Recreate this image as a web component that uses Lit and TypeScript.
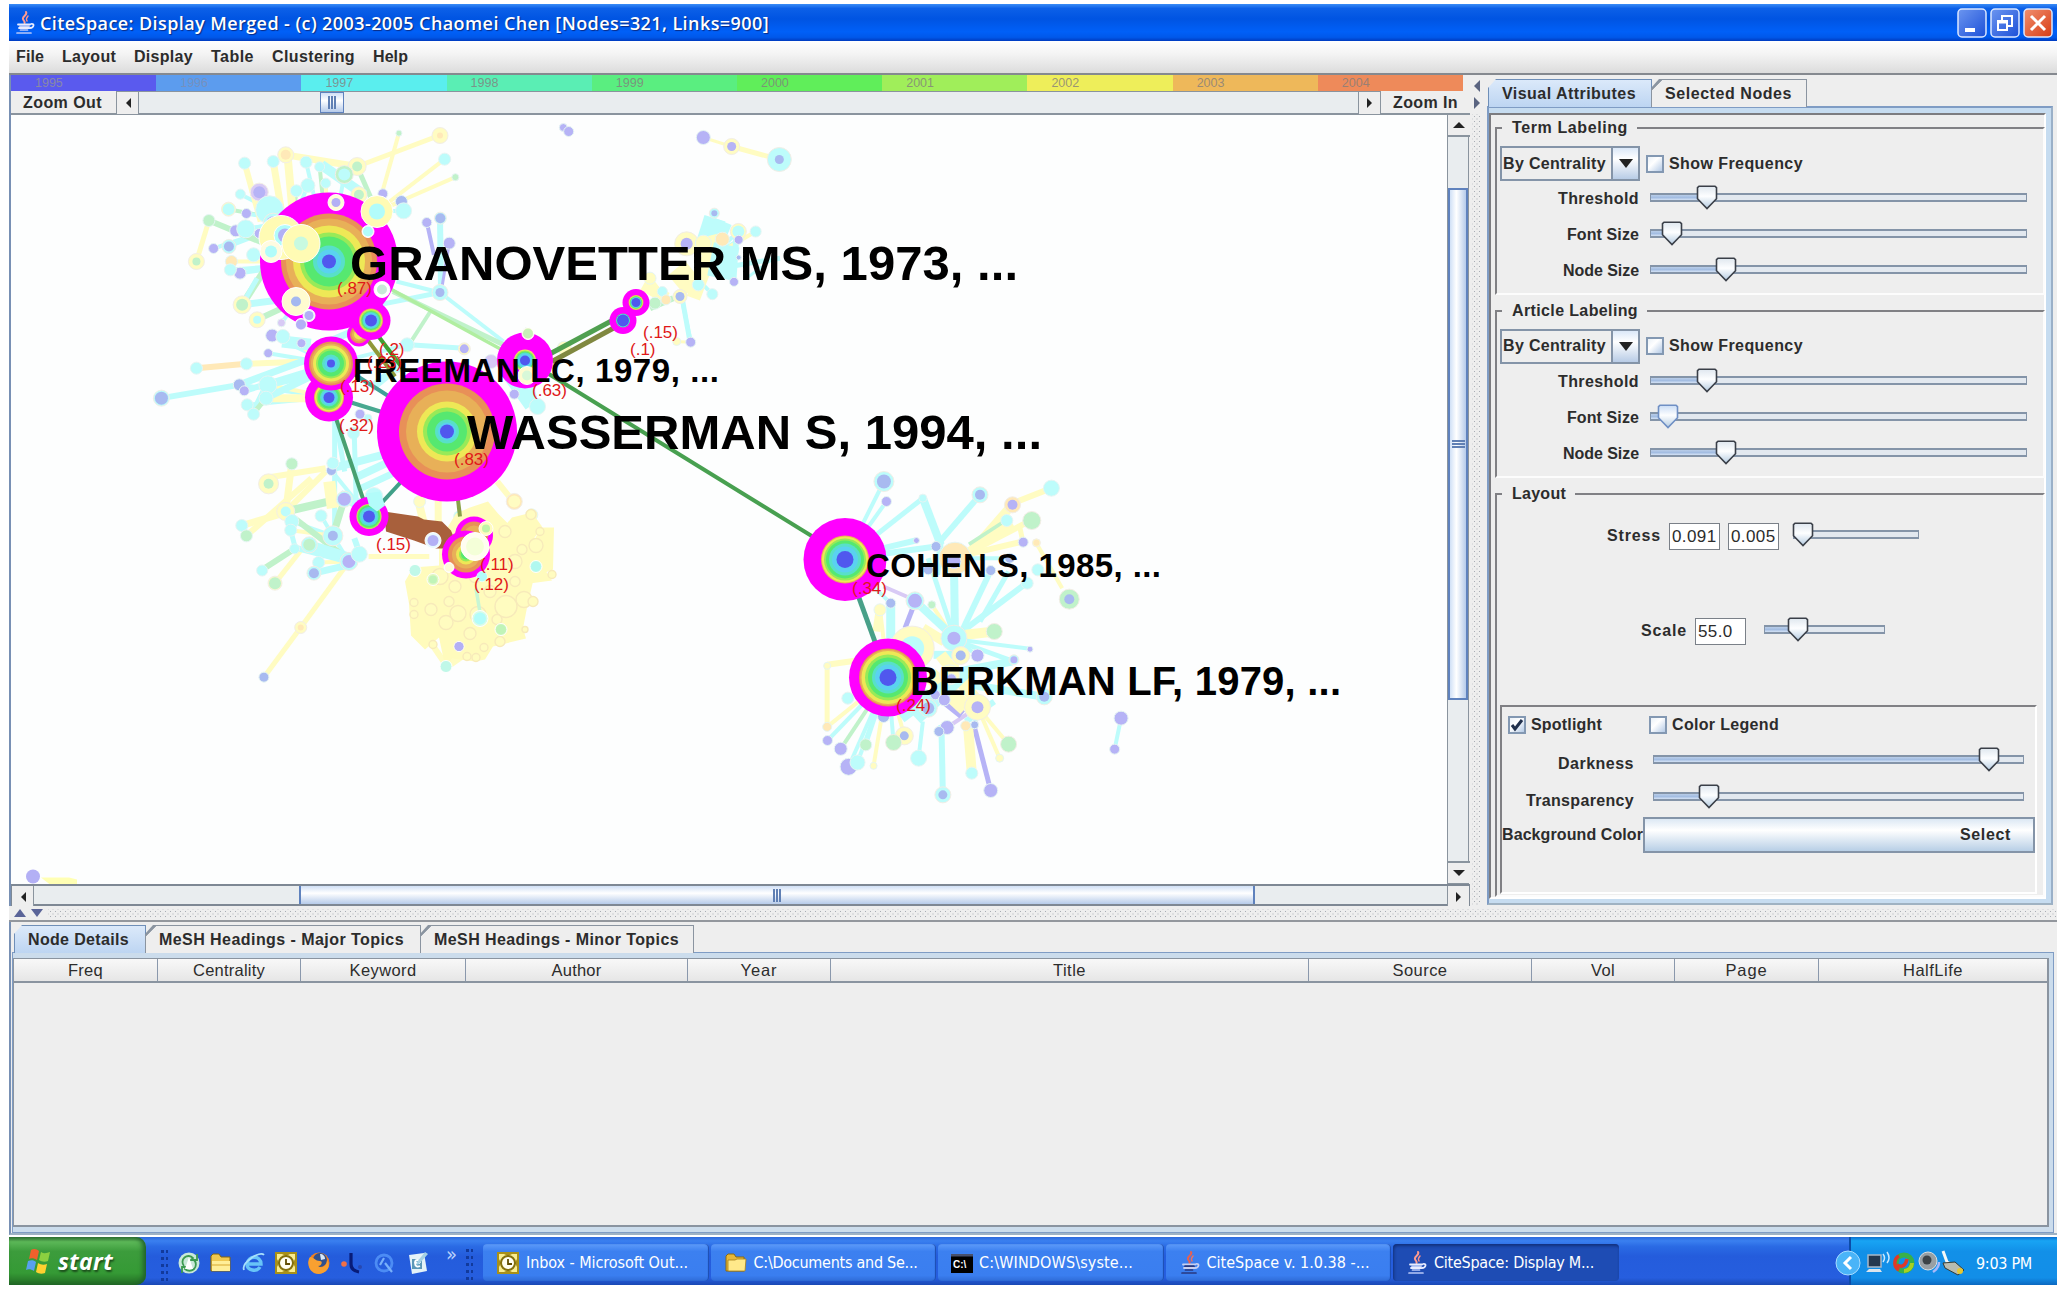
import { LitElement, html, css, svg } from "lit";
import { customElement, property } from "lit/decorators.js";
import { classMap } from "lit/directives/class-map.js";
import { styleMap } from "lit/directives/style-map.js";

/* Text that spreads its letters so that it fills a given width. */
@customElement("fit-text")
class FitText extends LitElement {
  @property({ type: Number }) w = 0;
  @property() text = "";
  static styles = css`
    :host { display: inline-block; white-space: pre; }
  `;
  render() {
    return html`<span>${this.text}</span>`;
  }
  updated() {
    const span = this.renderRoot.querySelector("span") as HTMLElement;
    span.style.letterSpacing = "0px";
    const natural = span.getBoundingClientRect().width;
    if (natural && this.w) {
      span.style.letterSpacing = `${(this.w - natural) / this.text.length}px`;
    }
  }
}

@customElement("metal-slider")
class MetalSlider extends LitElement {
  @property({ type: Number }) w = 377;
  @property({ type: Number }) pos = 0;
  @property({ type: Boolean }) hot = false;
  static styles = css`
    :host { display: block; }
    .slider { position: relative; height: 26px; }
    .track { box-sizing: border-box; position: absolute; left: 0; right: 0; top: 7px; height: 9px; border: 2px solid #8494a8; border-width: 2px 1.5px 2px 1.5px; background: #e2e8ef; }
    .fill { height: 5px; background: linear-gradient(#b9cde8, #a3bde2 50%, #d4e2f5); }
    .thumb { position: absolute; top: -1px; width: 22px; height: 25px; margin-left: -11px; }
  `;
  render() {
    const edge = this.hot ? "#6f8fc4" : "#3a3f48";
    return html`<div class="slider" style=${styleMap({ width: `${this.w}px` })}>
      <div class="track"><div class="fill" style=${styleMap({ width: `${Math.max(0, this.pos)}px` })}></div></div>
      <svg class="thumb" style=${styleMap({ left: `${this.pos}px` })} viewBox="0 0 22 25">
        <defs><linearGradient id="g" x1="0" y1="0" x2="0" y2="1">
          <stop offset="0" stop-color=${this.hot ? "#c9dcf5" : "#dfe7ef"} /><stop offset=".45" stop-color="#fdfeff" /><stop offset="1" stop-color="#b5cce2" />
        </linearGradient></defs>
        <path d="M3 1.2h16l1.5 1.5v11L11 23.5L1.500 13.700v-11z" fill="url(#g)" stroke=${edge} stroke-width="1.6" />
      </svg>
    </div>`;
  }
}

type Tone = "y" | "c" | "p" | "g" | "o" | "b" | "m";
const TONE: Record<Tone, string> = {
  y: "#fffcc2", c: "#bdfcfb", p: "#b6b3f6", g: "#c0f2ca", o: "#ffe9b8", b: "#a8baf0", m: "#d8caf5",
};

/* x, y, radius, tone, hub index (-1: none), link tone, halo radius, halo tone */
type Spot = [number, number, number, Tone, number?, Tone?, number?, Tone?];
interface Cluster { ox: number; oy: number; sx: number; sy: number; hubs: number[][]; spots: Spot[]; links: [number, number, number, number, Tone, number][]; }

const clusters: Cluster[] = [
  {
    ox: 150, oy: 110, sx: 1 / 2.8, sy: 1 / 3,
    hubs: [[502, 450], [400, 330], [635, 300], [508, 757], [502, 857], [812, 543], [700, 430], [1050, 748]],
    links: [
      [812, 543, 990, 690, "c", 4], [812, 543, 640, 580, "c", 5], [690, 510, 812, 543, "c", 4],
      [775, 332, 795, 430, "p", 4], [812, 320, 815, 543, "c", 6], [838, 395, 815, 543, "p", 3],
      [680, 540, 990, 700, "g", 5], [785, 600, 725, 700, "g", 4], [725, 700, 880, 710, "c", 5],
      [130, 770, 270, 757, "o", 6], [270, 757, 440, 750, "y", 6], [32, 860, 250, 820, "c", 6], [250, 820, 450, 740, "c", 7],
      [265, 838, 440, 780, "c", 6], [290, 905, 330, 820, "c", 8], [330, 820, 450, 790, "c", 7], [325, 860, 450, 860, "y", 8],
      [290, 905, 325, 860, "g", 5], [325, 860, 460, 790, "c", 7], [370, 690, 450, 700, "c", 12],
      [580, 165, 635, 300, "g", 5], [380, 130, 580, 165, "y", 7], [580, 165, 810, 72, "y", 5],
      [165, 327, 330, 400, "g", 6], [258, 580, 400, 560, "c", 7], [258, 580, 330, 460, "g", 7],
      [300, 625, 410, 570, "g", 6], [300, 500, 258, 580, "c", 5], [130, 450, 165, 327, "y", 5],
      [265, 155, 310, 330, "y", 6], [345, 150, 370, 310, "y", 7], [385, 130, 400, 310, "y", 8],
      [1490, 560, 1512, 690, "c", 5], [510, 857, 545, 1080, "c", 5], [1010, 790, 1070, 880, "c", 16],
      [620, 830, 700, 760, "c", 8], [480, 160, 600, 250, "c", 10], [610, 640, 480, 700, "c", 7],
    ],
    spots: [
      [697, 65, 3, "g", 2, "y"], [812, 72, 3, "o", -1, "y", 8, "y"], [825, 143, 6, "c", 2, "y"], [855, 197, 3.5, "g", 2, "y"],
      [380, 130, 5, "o", -1, "y", 8, "y"], [265, 155, 6, "c"], [345, 150, 6, "c"], [437, 152, 6, "c", 0, "c"], [475, 166, 5, "c", 0, "g"],
      [580, 165, 5, "g", -1, "y", 9, "y"], [544, 189, 6, "c", 0, "c", 9, "g"], [492, 215, 5, "c", 0, "y"], [442, 222, 7, "c", 1, "c"],
      [253, 248, 5, "c", 1, "c"], [306, 242, 6, "p", 1, "c", 9, "m"], [410, 238, 6, "c", 1, "g"], [585, 250, 5, "g", 0, "y", 8, "y"],
      [652, 247, 5, "p", 2, "c"], [704, 270, 6, "b", 2, "y"], [710, 298, 8, "c", 2, "c"], [220, 293, 6, "c", 1, "g", 7, "y"],
      [270, 306, 5, "p", 1, "c"], [165, 327, 6, "g"], [240, 358, 6, "p", 1, "c"], [268, 352, 9, "c", 1, "c"], [306, 366, 5, "p", 1, "g"],
      [335, 295, 14, "c", 1, "y"], [345, 335, 7, "p", 1, "c", 10, "c"], [178, 411, 5, "p", 1, "c"], [221, 405, 5, "b", 1, "c", 7, "c"],
      [130, 450, 4, "g", -1, "y", 8, "y"], [228, 450, 6, "o", 0, "y"], [252, 485, 6, "p", 0, "c"], [225, 475, 6, "c", 0, "c"], [290, 430, 7, "c", 0, "c"],
      [258, 580, 6, "g", -1, "y", 9, "y"], [300, 625, 4, "c", -1, "y", 8, "y"], [368, 634, 4, "m", 0, "c"], [342, 672, 6.5, "p", 3, "c"],
      [331, 725, 4.5, "p", 3, "c"], [372, 675, 7, "c", 3, "y"], [424, 695, 4.5, "p", 3, "c"], [130, 770, 6, "c"], [270, 757, 6, "c"],
      [32, 860, 6.5, "b", -1, "c", 8, "c"], [250, 820, 6, "b", 4, "c"], [264, 838, 5, "p"], [330, 820, 9, "c", 4, "y"], [325, 860, 7, "c"],
      [272, 880, 6, "c", 4, "c"], [290, 908, 6, "c"], [775, 333, 5, "p"], [813, 320, 5, "b", -1, "c", 6, "c"], [838, 395, 6, "p"],
      [812, 543, 4.5, "b", -1, "c", 8, "c"], [720, 700, 7, "c", 3, "c"], [880, 712, 4.5, "p", -1, "c", 6, "y"], [955, 750, 7, "m", 7, "c"],
      [1160, 710, 7, "y", 7, "y"], [1057, 663, 5, "g", 7, "y"], [1020, 848, 5, "p", 7, "c"], [588, 908, 5, "p"], [570, 965, 6, "c"], [690, 760, 8, "c"],
      [1085, 885, 8, "c", 7, "c"], [610, 920, 4, "c"],
    ],
  },
  {
    ox: 140, oy: 380, sx: 1 / 2.8, sy: 1 / 3,
    hubs: [[640, 405], [540, 463], [585, 540], [880, 150], [960, 560]],
    links: [
      [545, 100, 545, 440, "c", 5], [600, 160, 605, 350, "c", 5], [425, 245, 408, 390, "y", 7], [345, 290, 520, 260, "y", 6],
      [408, 390, 520, 270, "y", 6], [298, 463, 480, 290, "y", 6], [285, 432, 420, 390, "y", 7], [408, 390, 570, 350, "g", 8],
      [420, 400, 590, 540, "g", 6], [408, 390, 435, 500, "c", 5], [342, 565, 433, 502, "g", 6], [585, 540, 450, 738, "y", 5],
      [450, 738, 347, 887, "y", 5], [378, 605, 470, 480, "y", 5], [640, 525, 810, 525, "y", 5], [487, 575, 585, 550, "c", 7],
      [540, 463, 570, 360, "g", 7], [470, 490, 590, 530, "c", 10], [600, 470, 620, 530, "c", 6], [440, 500, 585, 540, "c", 6],
      [540, 260, 680, 220, "c", 8], [600, 290, 700, 240, "c", 8], [620, 320, 740, 260, "c", 7], [780, 360, 800, 450, "y", 8], [835, 350, 835, 450, "y", 7],
      [1000, 300, 1045, 360, "y", 6], [860, 855, 780, 730, "y", 6], [860, 855, 960, 780, "y", 7], [560, 340, 660, 390, "c", 10],
      [530, 300, 540, 380, "y", 12], [830, 440, 830, 480, "g", 6],
    ],
    spots: [
      [425, 247, 6, "g"], [360, 307, 5, "g", -1, "y", 10, "y"], [536, 267, 5, "b", 0, "c"], [572, 353, 6.500, "p", 0, "c", 8, "c"], [408, 390, 5, "c", -1, "y", 9, "y"],
      [507, 403, 6, "c", 1, "c"], [285, 432, 6, "c"], [298, 463, 6, "g"], [425, 420, 7, "c", 1, "c"], [422, 446, 6, "c", 1, "y"],
      [540, 463, 5, "b", 2, "c", 10, "c"], [474, 490, 6, "g", 2, "y", 8, "c"], [433, 502, 5, "c"], [342, 567, 5.500, "c"], [500, 543, 6, "c", 2, "y"],
      [585, 540, 6.500, "p", -1, "c", 9, "c"], [614, 518, 8, "c"], [487, 575, 5, "b", -1, "c", 7, "c"], [378, 605, 6, "g", -1, "g", 7, "y"],
      [450, 738, 3, "o", -1, "y", 6, "y"], [347, 887, 5, "b"], [540, 245, 6, "c"], [655, 345, 9, "c"], [895, 405, 6, "c"], [1048, 360, 6, "y", -1, "o", 8, "o"],
      [1097, 400, 6, "y"], [783, 360, 6, "y"],
    ],
  },
  {
    ox: 780, oy: 440, sx: 1 / 2.8, sy: 1 / 3,
    hubs: [[487, 590], [303, 708], [181, 355], [400, 840], [553, 797], [490, 350], [500, 720]],
    links: [
      [400, 170, 270, 280, "c", 5], [400, 170, 450, 310, "c", 8], [560, 160, 440, 310, "c", 6], [650, 190, 520, 350, "y", 9], [760, 140, 640, 190, "y", 6],
      [635, 237, 530, 310, "g", 5], [650, 245, 500, 350, "y", 8], [705, 235, 500, 350, "y", 6], [680, 300, 520, 340, "y", 6], [680, 300, 670, 250, "y", 5],
      [718, 305, 790, 440, "y", 4], [487, 350, 490, 590, "c", 8], [590, 387, 500, 590, "c", 6], [690, 425, 510, 570, "c", 6], [640, 390, 560, 540, "c", 5],
      [415, 350, 480, 560, "c", 5], [450, 300, 440, 400, "c", 6], [520, 580, 600, 570, "y", 10], [500, 595, 700, 622, "c", 4], [500, 600, 655, 660, "c", 5],
      [380, 477, 350, 560, "p", 5], [290, 435, 380, 477, "m", 4], [310, 485, 310, 590, "c", 9], [280, 500, 270, 570, "y", 8], [380, 480, 490, 590, "c", 8],
      [132, 670, 132, 855, "y", 5], [132, 670, 230, 655, "y", 6], [545, 860, 590, 1047, "p", 5], [527, 860, 537, 995, "y", 10], [452, 850, 456, 1060, "c", 6],
      [440, 760, 510, 820, "p", 9], [520, 840, 600, 780, "c", 6], [955, 830, 937, 923, "c", 4], [430, 640, 500, 640, "c", 8], [400, 560, 460, 600, "y", 10],
      [290, 320, 380, 297, "c", 6], [270, 340, 437, 315, "c", 6], [480, 720, 740, 766, "c", 8], [500, 690, 650, 660, "c", 8], [420, 700, 520, 800, "y", 16],
      [450, 640, 560, 790, "y", 12], [380, 830, 520, 690, "c", 14], [340, 830, 500, 700, "c", 10],
    ],
    spots: [
      [291, 120, 7, "b", 2, "c", 10, "c"], [298, 180, 5, "p", 2, "c"], [400, 170, 4, "c"], [560, 160, 5, "b", -1, "c", 8, "c"], [651, 190, 5, "p", -1, "y", 8, "o"],
      [760, 140, 8, "c"], [705, 237, 5, "g", -1, "y", 9, "g"], [635, 237, 6, "c"], [681, 302, 5, "p"], [718, 304, 3, "o", -1, "y", 4, "y"], [437, 315, 5, "b"],
      [382, 297, 3, "p"], [490, 350, 16, "o", -1, "y"], [487, 360, 7, "p"], [590, 387, 5, "b"], [415, 385, 5, "b"], [692, 425, 6, "c"], [722, 385, 6, "c"], [643, 350, 5, "b", 5, "c"],
      [810, 473, 5, "b", -1, "y", 10, "g"], [310, 485, 5, "b", 2, "c"], [378, 478, 7, "p", -1, "c", 9, "c"], [425, 490, 4, "g", 0, "y"], [280, 505, 6, "y", 1, "y"],
      [370, 620, 12, "c", -1, "c", 22, "y"], [487, 590, 6.5, "p", 6, "y", 13, "c"], [600, 570, 6, "g", -1, "y", 8, "g"], [506, 642, 5, "b", 0, "y", 9, "y"], [553, 642, 6.5, "p", 0, "c"],
      [700, 623, 3, "p"], [655, 655, 3.5, "p", -1, "c", 5, "c"], [475, 700, 10, "y", 4, "y"], [480, 712, 5, "p"], [740, 766, 5, "b", -1, "c", 8, "c"],
      [553, 797, 6, "p", 6, "y", 13, "y"], [468, 858, 7, "p", 4, "m"], [445, 870, 5, "b"], [520, 853, 5, "o"], [545, 850, 4, "b", 4, "c"], [348, 883, 4.500, "b", 1, "y", 9, "y"],
      [318, 903, 4, "g", 1, "c", 8, "g"], [290, 825, 6, "b", 1, "c"], [388, 950, 8, "c", 3, "c"], [132, 856, 4.5, "o", 1, "y"], [133, 897, 5, "p", 1, "c"],
      [170, 922, 6.500, "p", 1, "g"], [192, 976, 8.5, "p", 1, "c"], [217, 963, 7.500, "c", 1, "c"], [262, 973, 3.500, "y", 1, "y"], [240, 910, 6, "g", 1, "c"],
      [640, 908, 5, "g", 4, "y", 8, "g"], [615, 950, 4, "y", 4, "y"], [537, 995, 6, "c"], [590, 1047, 7, "p"], [456, 1060, 4.500, "b", -1, "c", 8, "c"],
      [955, 830, 7, "p"], [937, 923, 5, "p"], [132, 673, 3.500, "y"], [435, 760, 5, "p", 1, "c"], [190, 770, 6, "c", 1, "c"], [415, 800, 6, "b", 1, "c", 9, "c"], [460, 775, 6, "p"],
    ],
  },
  {
    ox: 560, oy: 110, sx: 1 / 3, sy: 1 / 3,
    hubs: [[450, 440], [400, 490], [300, 540]],
    links: [
      [430, 78, 515, 105, "y", 3], [515, 105, 658, 144, "y", 5], [365, 560, 392, 690, "c", 4], [350, 690, 390, 692, "y", 3],
      [465, 320, 440, 400, "c", 22], [490, 330, 460, 400, "c", 18], [500, 375, 400, 400, "y", 10], [530, 360, 520, 510, "c", 6], [640, 440, 560, 500, "c", 3],
      [660, 440, 480, 470, "c", 5], [350, 470, 400, 530, "y", 22], [250, 520, 320, 560, "y", 12], [270, 590, 340, 560, "g", 6], [460, 400, 400, 560, "y", 14], [500, 400, 480, 500, "c", 26],
    ],
    spots: [
      [10, 48, 4, "p"], [26, 60, 5, "p"], [430, 78, 7, "p"], [515, 105, 4.5, "p", -1, "y", 8, "y"], [658, 144, 4.500, "b", -1, "c", 12, "c"],
      [463, 305, 3, "b", -1, "c", 5, "c"], [380, 397, 6, "p", 0, "y", 12, "y"], [535, 360, 6, "c", 0, "c", 8, "y"], [536, 385, 4.5, "p", 0, "c"], [587, 360, 5.500, "c", 0, "y"],
      [430, 395, 8, "y", 0, "y"], [487, 383, 7, "o", 0, "y"], [536, 438, 2.5, "b"], [522, 511, 4.500, "p"], [415, 520, 6, "c", 1, "c"], [360, 555, 4.5, "b", 1, "y", 7, "y"],
      [307, 540, 5, "c", 2, "c"], [457, 548, 5.500, "c", 1, "c"], [270, 500, 6, "y", 2, "y"], [285, 575, 6, "g", 2, "g"], [318, 565, 5, "o"], [392, 692, 5, "p"], [350, 690, 4, "y"],
    ],
  },
];

/* Rings of the yellow community, in canvas pixels: x, y, radius */
const rings = [
  [414, 601, 4], [414, 613, 4], [431, 608, 6], [449, 600, 5], [458, 612, 8], [446, 621, 7], [506, 605, 11], [524, 598, 8], [533, 600, 5], [478, 613, 8],
  [467, 655, 4], [476, 656, 4], [484, 646, 4], [525, 628, 3], [536, 544, 7], [540, 530, 4], [531, 513, 5], [552, 573, 4], [490, 590, 6], [515, 560, 7],
  [522, 548, 5], [500, 640, 5], [433, 643, 4], [470, 632, 6], [505, 530, 6], [440, 575, 8], [455, 585, 6], [475, 575, 6], [515, 580, 5], [497, 618, 5],
];

const hues = ["#e89058", "#e8b058", "#eee856", "#98ea58", "#56e870", "#58e0c8", "#5ad2f0", "#5058ee"];
/* x, y, outer radius, ring radii from orange to blue */
const pivots: [number, number, number, number[]][] = [
  [329, 260, 69, [48, 43, 36, 29, 25, 16, 12, 7]],
  [359, 333, 12, [9, 7, 5, 0, 0, 0, 0, 0]],
  [371, 319, 19.500, [0, 12, 11, 10.5, 9.500, 8.5, 7.500, 6]],
  [329, 396, 24, [0, 15, 14, 12.5, 11, 9, 7.500, 5.5]],
  [331, 362, 27, [22, 20, 18, 15, 13, 9, 6.500, 4]],
  [447, 430, 70, [48, 41, 30, 24, 20, 12, 9, 7]],
  [525, 359, 28, [0, 0, 11, 10, 9, 8, 7, 5]],
  [636, 301, 13.500, [0, 7.5, 7, 6.500, 6, 5.500, 5, 4.5]],
  [623, 319, 13.500, [0, 0, 0, 0, 7, 6.5, 6.500, 6]],
  [369, 515, 19.5, [0, 0, 12.500, 12, 11, 9.5, 8, 6]],
  [474, 534, 19, [14, 10, 0, 0, 0, 0, 0, 0]],
  [466, 553, 24, [18, 14, 10, 7, 5, 0, 0, 0]],
  [845, 558, 41.5, [0, 24, 23, 21, 19, 16, 13, 8.500]],
  [888, 676, 39, [29, 28, 26.500, 23, 20, 16, 13, 8.5]],
];

const strong: [number, number, number, number, string, number][] = [
  [545, 355, 616, 317, "#50a050", 5], [552, 360, 622, 322, "#808840", 5], [548, 372, 845, 555, "#48a050", 4], [845, 558, 888, 676, "#48a088", 5],
  [329, 396, 369, 515, "#48a070", 4], [369, 515, 420, 460, "#40a088", 4], [457, 490, 460, 515, "#88a048", 4], [371, 325, 405, 370, "#40a030", 4], [365, 335, 395, 375, "#909838", 4],
  [350, 370, 400, 402, "#40a098", 4], [335, 396, 390, 413, "#48a890", 4], [386, 285, 505, 350, "#b0eea0", 3.5],
];

const overs: [number, number, number, string, number, string][] = [
  [281, 236, 15, "#fffbb4", 22, "#fffbb4"], [285, 234, 7, "#b3b0f5", 11, "#b2fcfa"], [301, 242, 7, "#c8fae0", 19, "#fffbb4"], [377, 210, 8, "#b2fcfa", 16, "#fffbb4"],
  [336, 201, 4.500, "#b3b0f5", 8, "#fffdd8"], [368, 230, 5, "#b2fcfa", 6, "#ffffff"], [382, 288, 5, "#c8e8d8", 8, "#ffffff"], [296, 300, 5, "#a4b8f0", 14, "#fffbd0"],
  [309, 314, 4.500, "#b3b0f5", 6, "#e8fff8"], [301, 323, 5, "#b3b0f5", 6, "#f0e8ff"], [271, 250, 6, "#b2fcfa", 11, "#fffbe0"], [527, 374, 5, "#d8f8d8", 9, "#fffbd0"],
  [528, 332, 5, "#c8f0b8", 6, "#fffbe0"], [433, 539, 5.500, "#b3b0f5", 8, "#e8f8ff"], [475, 545, 9, "#f4ffd8", 14, "#fffdf0"], [486, 527, 4, "#c0f4a8", 7, "#fffbc0"],
  [449, 566, 4, "#fffbd8", 5, "#ffffff"], [482, 575, 5, "#b2fcfa", 5, "#b2fcfa"], [536, 565, 5, "#b0f8f0", 6, "#c0fce8"], [433, 578, 4, "#c0f4b8", 6, "#e0f8c0"], [415, 569, 5, "#c0f8e8", 6, "#c0f8e8"],
  [480, 617, 6, "#b2fcfa", 8, "#d8fce8"], [501, 628, 5, "#c0f4b8", 6, "#d0f8c0"], [459, 645, 4.500, "#b3b0f5", 5, "#c8c0f5"], [446, 665, 5, "#c0f8e8", 6, "#c0f8e8"],
];

const names: [string, number, number, number, number][] = [
  ["GRANOVETTER MS, 1973, ...", 350, 278, 49, 668], ["FREEMAN LC, 1979, ...", 353, 380, 33, 366], ["WASSERMAN S, 1994, ...", 467, 447, 49, 575],
  ["COHEN S, 1985, ...", 866, 575, 33, 295], ["BERKMAN LF, 1979, ...", 910, 693, 40, 431],
];
const scores: [string, number, number][] = [
  ["(.87)", 337, 292], ["(.2)", 379, 353], ["(.23)", 367, 366], ["(.13)", 340, 390], ["(.32)", 339, 429], ["(.63)", 532, 394], ["(.15)", 643, 336], ["(.1)", 630, 353],
  ["(.83)", 454, 463], ["(.15)", 376, 548], ["(.11)", 480, 568], ["(.12)", 474, 588], ["(.34)", 852, 592], ["(.24)", 896, 709],
];

@customElement("citation-graph")
class CitationGraph extends LitElement {
  static styles = css`
    :host { display: block; overflow: hidden; background: #fdfefe; }
    svg { display: block; }
    .name { font: bold 40px "Liberation Sans", sans-serif; fill: #000; }
    .score { font: 17px "Liberation Sans", sans-serif; fill: #e01818; }
  `;
  private faded(c: Cluster) {
    const X = (x: number) => c.ox + x * c.sx;
    const Y = (y: number) => c.oy + y * c.sy;
    const line = (a: number, b: number, d: number, e: number, t: Tone, w: number) =>
      svg`<line x1=${X(a)} y1=${Y(b)} x2=${X(d)} y2=${Y(e)} stroke=${TONE[t]} stroke-width=${w} />`;
    return svg`
      ${c.spots.filter((s) => s[4] !== undefined && s[4]! >= 0).map((s) => line(s[0], s[1], c.hubs[s[4]!][0], c.hubs[s[4]!][1], s[5]!, 4))}
      ${c.links.map((l) => line(...l))}
      ${c.spots.map((s) => svg`
        ${s[6] ? svg`<circle cx=${X(s[0])} cy=${Y(s[1])} r=${s[6]} fill=${TONE[s[7]!]} stroke="#f2eee6" stroke-width="1" />` : ""}
        <circle cx=${X(s[0])} cy=${Y(s[1])} r=${s[2]} fill=${TONE[s[3]]} stroke=${s[6] ? "none" : "#e6f5f3"} stroke-width="1" />`)}
    `;
  }
  render() {
    return html`<svg width="1436" height="769" viewBox="11 113.500 1436 769">
      ${clusters.map((c) => this.faded(c))}
      <path d="M456 512l14-6 18 -6 10 12 14 14 8 10 15 2 5-12 14 0-1 42-10 4 0 6-10 2-6 26-4 21 3 10-33 8-8 13-10 2-22-3-8 7-6-28-14 12-14-14-2-32-4-22 8-14 26-2 0-24z" fill="#fffbbc" />
      <path d="M500 530l12-14 20-5 10 14-8 12 16 6-6 24 8 12-30 4z" fill="#fffbbc" />
      ${rings.map((r) => svg`<circle cx=${r[0]} cy=${r[1]} r=${r[2]} fill="#fffcc0" stroke="#f7eaba" stroke-width="1.4" />`)}
      <line x1="476" y1="587" x2="481" y2="617" stroke="#c8f6d4" stroke-width="3.500" />
      ${strong.map((l) => svg`<line x1=${l[0]} y1=${l[1]} x2=${l[2]} y2=${l[3]} stroke=${l[4]} stroke-width=${l[5]} />`)}
      <path d="M384 510l34 5 6 3 18 2 9 9 4 10-9 8-10 0-22-8-28-9z" fill="#a8603c" />
      ${pivots.map((p) => svg`
        <circle cx=${p[0]} cy=${p[1]} r=${p[2]} fill="#ff00ff" />
        ${p[3].map((r, i) => (r ? svg`<circle cx=${p[0]} cy=${p[1]} r=${r} fill=${hues[i]} />` : ""))}`)}
      <path d="M366 492l14-2 5 14-8 6-8-6z" fill="#b2fcfa" />
      ${overs.map((o) => svg`<circle cx=${o[0]} cy=${o[1]} r=${o[4]} fill=${o[5]} stroke="#fff" stroke-width="1" />
        <circle cx=${o[0]} cy=${o[1]} r=${o[2]} fill=${o[3]} />`)}
      <circle cx="33" cy="875" r="7" fill="#b3b0f5" /><path d="M41 876h28l8 2v5H50z" fill="#ffffb4" />
      ${names.map((n) => svg`<text class="name" x=${n[1]} y=${n[2]} textLength=${n[4]} lengthAdjust="spacing" style=${`font-size:${n[3]}px`}>${n[0]}</text>`)}
      ${scores.map((s) => svg`<text class="score" x=${s[1]} y=${s[2]}>${s[0]}</text>`)}
    </svg>`;
  }
}

const java = (light = false) => svg`<svg width="22" height="24" viewBox="0 0 22 24" fill="none" stroke-linecap="round">
  <path d="M12 1c2 3-4 4-3 7 .5 2 2 2 1.500 4" stroke=${light ? "#ff9c90" : "#e86050"} stroke-width="2" />
  <path d="M14 5c-2 2-2 3-1 5" stroke=${light ? "#ff9088" : "#f07060"} stroke-width="1.500" />
  <path d="M4 13.500h12M5 17h10M17 13c4-1 3 4-1 4" stroke=${light ? "#e8ecff" : "#c8d0f0"} stroke-width="1.8" />
  <path d="M6 15.200h9M6.500 19h7M3 22h14" stroke=${light ? "#b8c8f8" : "#283880"} stroke-width="1.7" /></svg>`;

const folder = () => svg`<svg width="24" height="24" viewBox="0 0 24 24"><path d="M2 20V5l2-2h6l2 3h8v14z" fill="#e8b838" stroke="#8a6a10" /><path d="M4 20V9h7l2-1h9l-1 12z" fill="#ffe98a" stroke="#a88018" stroke-width=".8" /></svg>`;
const outlook = () => svg`<svg width="24" height="26" viewBox="0 0 24 26"><path d="M1 2h22v22H1z" fill="#a89018" /><path d="M3 4h5l4 2 4-2h5v5l-2 4 2 4v5h-5l-4-2-4 2H3v-5l2-4-2-4z" fill="#f8ec90" /><circle cx="12" cy="13" r="7" fill="#fffef0" stroke="#84700c" stroke-width="2" /><path d="M12 9v5h4" fill="none" stroke="#604c00" stroke-width="1.8" /></svg>`;
const terminal = () => svg`<svg width="22" height="22" viewBox="0 0 22 22"><path d="M0 2h22v19H0z" fill="#000" /><path d="M0 2h22v2.500H0z" fill="#48506c" /><text x="2" y="16" font-size="10" font-weight="bold" fill="#fff" font-family="Liberation Sans, sans-serif">C:\\</text></svg>`;
const flag = () => svg`<svg width="30" height="30" viewBox="0 0 30 30"><path d="M7 4c3-2 6-1 8 1l-2 9c-3-2-6-2-8-1z" fill="#f0602c" /><path d="M17 6c3 2 6 1 9 0l-2 9c-3 1-6 1-9-1z" fill="#8cd040" /><path d="M4 15c3-1 6-1 8 1l-2 9c-3-2-6-2-8-1z" fill="#58a0f0" /><path d="M14 17c3 2 6 2 9 1l-2 9c-3 1-6 1-9-1z" fill="#ffd030" /></svg>`;

const launchers = [
  svg`<circle cx="12" cy="12" r="10.500" fill="#c8e8d8" /><path d="M7 15a6 6 0 0 1 9-8l-2 2h6V3M17 9a6 6 0 0 1-9 9l2-2H5v6" fill="none" stroke="#3c9a50" stroke-width="1.800" /><path d="M12 6l4 12H8z" fill="#fff" />`,
  svg`<path d="M2 20V5l2-2h6l2 3h9v14z" fill="#f0c850" stroke="#86660c" /><path d="M3 10h18v10H3z" fill="#ffee98" /><path d="M3 14h18" stroke="#d8a830" />`,
  svg`<path d="M5 13h14c0-9-13-9-14 0 0 7 10 8 13 3" fill="none" stroke="#68c4f8" stroke-width="3.400" /><path d="M2 19C-1 12 18-1 22 4" fill="none" stroke="#a8e0fc" stroke-width="1.800" />`,
  svg`<path d="M1 1h22v22H1z" fill="#a89018" /><path d="M3 3h5l4 2 4-2h5v5l-2 4 2 4v5h-5l-4-2-4 2H3v-5l2-4-2-4z" fill="#f8ec90" /><circle cx="12" cy="12" r="7" fill="#fffef0" stroke="#84700c" stroke-width="2" /><path d="M12 8v5h4" fill="none" stroke="#604c00" stroke-width="1.800" />`,
  svg`<circle cx="12" cy="12" r="10.500" fill="#f08020" /><circle cx="13" cy="9" r="7" fill="#30508c" /><path d="M3 6c4 0 5 4 10 4 3 0 2 5-2 5 4 3 9 0 9-6 4 5 1 13-8 14C2 23-1 12 3 6z" fill="#f8a030" /><path d="M13 3c3 0 5 2 5 5l-4 1z" fill="#d8e8f8" />`,
  svg`<path d="M11 2v11c0 4 2 7 8 8" fill="none" stroke="#081c78" stroke-width="3.200" /><circle cx="4" cy="13" r="2.800" fill="#f07048" /><circle cx="20" cy="16" r="2" fill="#2848b0" />`,
  svg`<circle cx="12" cy="12" r="8" fill="none" stroke="#4c8cf4" stroke-width="2.800" /><path d="M13 12l7 9M8 14l4-7" stroke="#78b0fa" stroke-width="2.200" />`,
  svg`<path d="M4 4l15-2 3 18-15 3z" fill="#e4f2f8" /><path d="M7 8h10v10H7z" fill="#5c98b8" /><path d="M15 12h-5c0 4 3 4 5 3M10 12c0-4 5-4 5 0" fill="none" stroke="#fff" stroke-width="1.800" /><path d="M20 1l3 2-9 10-3 1 1-3z" fill="#a4d0e4" />`,
];

const years: [string, string][] = [
  ["1995", "#5a5aee"], ["1996", "#5c9cee"], ["1997", "#5aeeee"], ["1998", "#5aeeb4"], ["1999", "#5aee80"], ["2000", "#60ee5a"], ["2001", "#a0ee5a"], ["2002", "#eeee5a"], ["2003", "#eeb85a"], ["2004", "#ee8a5a"],
];
const columns: [string, number, number][] = [
  ["Freq", 144, 35], ["Centrality", 143, 72], ["Keyword", 165, 67], ["Author", 222, 50], ["Year", 143, 37], ["Title", 478, 33], ["Source", 223, 55], ["Vol", 143, 24], ["Page", 144, 42], ["HalfLife", 230, 60],
];
const arrow = (d: string) => svg`<svg width="12" height="12" viewBox="0 0 12 12"><path d=${d} fill="#222" /></svg>`;
const LEFT = "M9 1v10L4 6z", RIGHT = "M3 1v10l5-5z", UP = "M0 9h12L6 3z", DOWN = "M0 3h12L6 9z";

@customElement("app-root")
class AppRoot extends LitElement {
  static styles = css`
    :host { display: block; font: bold 16px/18px "Liberation Sans", Arial, sans-serif; color: #2c2c2c; }
    * { box-sizing: border-box; }
    .screen { width: 2065px; height: 1290px; padding: 4px 8px 6px 9px; background: #fff; display: flex; flex-direction: column; overflow: hidden; }
    .title { height: 37px; flex: none; display: flex; align-items: center; padding: 0 3px 0 5px; gap: 4px; color: #fff; font: 600 18px "Open Sans", sans-serif; text-shadow: 1px 1px 1px #0a2a80; background: linear-gradient(#3a8cf6 0, #0c60e8 12%, #0054e2 40%, #0060f8 75%, #0058ea 90%, #003cc0 100%); }
    .title .grow { flex: 1; }
    .title svg { display: block; }
    .menu { height: 34px; flex: none; display: flex; align-items: center; gap: 18px; padding: 0 7px 1px; background: linear-gradient(#fff, #f4f4f4 40%, #dcdcdc); border-bottom: 2px solid #85898f; }
    .main { display: flex; height: 831px; flex: none; background: #eee; }
    .left { width: 1461px; display: flex; flex-direction: column; border-left: 2px solid #7890b4; }
    .legend { display: flex; height: 16px; width: 1452px; font: 12.500px/17px "Liberation Sans Narrow", "Liberation Sans", sans-serif; color: rgba(130, 125, 125, .8); }
    .legend div { flex: 1; padding-left: 24px; overflow: hidden; }
    .legend div:nth-child(1) { color: #8888a8; }
    .legend div:nth-child(2) { color: rgba(150, 130, 130, .45); }
    .zoom { display: flex; align-items: center; height: 24px; border-bottom: 2px solid #8a949e; }
    .zoom .lead { width: 105px; padding: 2px 0 0 12px; }
    .zoom .tail { padding: 2px 0 0 12px; }
    .bar { display: flex; border: 1px solid #8a949e; background: #e9edef; }
    .zoom .bar { height: 22px; width: 1265px; border-bottom: 0; }
    .btn { flex: none; display: flex; align-items: center; justify-content: center; width: 22px; height: 22px; background: #eee; }
    .btn.l { border-right: 1px solid #8a949e; } .btn.r { border-left: 1px solid #8a949e; }
    .btn.t { border-bottom: 2px solid #8a949e; } .btn.b { border-top: 2px solid #8a949e; }
    .h1 { width: 181px; } .grow { flex: 1; }
    .knob { border: 1px solid #5f82bd; background: linear-gradient(#d0e0f6, #fff 40%, #b6cbea); display: flex; align-items: center; justify-content: center; gap: 1.500px; }
    .knob i { width: 1.500px; height: 13px; background: #6080b4; }
    .knob.v { flex-direction: column; background: linear-gradient(90deg, #d0e0f6, #fff 40%, #b6cbea); border-width: 2px; }
    .knob.v i { width: 13px; height: 1.500px; }
    .k1 { width: 24px; } .k2 { width: 956px; border-width: 0 2px; } .k3 { height: 512px; }
    .h2 { width: 265px; } .v1 { height: 51px; }
    .view { display: flex; height: 769px; }
    .view citation-graph { width: 1436px; }
    .view .bar { flex-direction: column; width: 22px; border-top: 0; }
    .left > .bar { height: 22px; width: 1459px; border-width: 2px 1px; border-color: #7e8894; }
    .split { width: 17px; display: flex; flex-direction: column; align-items: center; padding: 5px 4px 0 0; gap: 5px; }
    .split svg { flex: none; }
    .dots { background-image: radial-gradient(circle, #a8adb4 .8px, transparent 1px), radial-gradient(circle, #a8adb4 .8px, transparent 1px); background-size: 5px 5px; background-position: 0 0, 2.500px 2.500px; }
    .split .dots { flex: 1; width: 9px; }
    .right { width: 566px; padding-top: 4px; }
    .tabs { display: flex; height: 28px; padding-left: 2px; margin-bottom: -1px; position: relative; }
    .tab { display: flex; align-items: center; padding-left: 13px; border: 1px solid #8a94a0; border-bottom: 0; background: linear-gradient(135deg, #8a94a0 7px, #eee 7.500px); clip-path: polygon(8px 0, 100% 0, 100% 100%, 0 100%, 0 9px); margin-left: -1px; }
    .tab.on { background: linear-gradient(#dbe9fa, #bdd5f2); border-color: #6f8fb8; }
    .pane { height: 799px; border: 2px solid #7f9cc4; border-right-color: #9ab0c8; border-bottom-color: #9fb2c2; background: #c6dcf0; padding: 5px 5px 4px 0; }
    .inner { height: 100%; background: #eee; border: 2px solid #7c7c80; border-right-color: #fff; border-bottom-color: #fff; padding: 4px 0 0 4px; display: flex; flex-direction: column; gap: 7px; }
    fieldset { margin: 0; padding: 0 0 0 3px; min-width: 0; width: 550px; height: 176px; border: 2px solid #808084; border-right-color: #fcfcfc; border-bottom-color: #fcfcfc; border-radius: 0; }
    fieldset.tall { height: 413px; }
    legend { margin-left: 2px; padding: 0 9px 0 10px; height: 18px; }
    .row { display: flex; align-items: center; height: 36px; }
    .row .lab { width: 139px; text-align: right; margin-right: 11px; }
    .first { margin-top: 9px; height: 35px; }
    .combo { width: 140px; height: 35px; border: 2px solid #8494a8; display: flex; align-items: center; padding-left: 1px; justify-content: space-between; }
    .combo .drop { width: 27px; height: 31px; border-left: 2px solid #8494a8; display: flex; align-items: center; justify-content: center; background: linear-gradient(#dbe8f8, #fff 35%, #b8cce6); }
    .check { width: 18px; height: 18px; border: 2px solid #8398b2; background: linear-gradient(135deg, #eaf1f8, #fff 40%, #b4cae6); margin: 0 5px 0 6px; flex: none; }
    .check svg { display: block; margin: -1px; }
    .form { display: flex; align-items: center; height: 27px; }
    .stress { margin: 20px 0 68px; padding-left: 107px; } .scale { margin-bottom: 60px; padding-left: 141px; }
    .field { width: 51px; height: 27px; border: 1.500px solid #7a8088; background: #fff; font: 17px/25px "Liberation Sans", sans-serif; padding-left: 2px; margin-left: 8px; letter-spacing: .4px; }
    .form metal-slider { margin-left: 14px; } .scale metal-slider { margin-left: 18px; }
    .sub { height: 189px; width: 537px; border: 2px solid #808084; border-right-color: #fff; border-bottom-color: #fff; }
    .sub .check { margin-left: 6px; }
    .sub .c2 { margin-left: 47px; }
    .sub .lab { width: 132px; margin-right: 19px; padding-top: 6px; }
    .sub .row { height: 37px; }
    .sub .row.opts { height: 36px; }
    .sub .row.pick { height: 36px; }
    .select { width: 393px; height: 36px; border: 2px solid #8494a8; background: linear-gradient(#dce8f4, #fff 35%, #b8cfe6); display: flex; align-items: center; justify-content: flex-end; padding-right: 22px; }
    .hsplit { height: 16px; flex: none; background: #eee; display: flex; align-items: center; gap: 5px; padding-left: 5px; border-bottom: 2px solid #93979d; }
    .hsplit .dots { flex: 1; height: 8px; }
    .bottom { height: 313px; flex: none; background: #eee; border-left: 2px solid #7890b4; padding: 3px 3px 0 1px; border-bottom: 2px solid #9eb2c4; }
    .bottom .tabs { height: 28px; padding-left: 3px; }
    .box { height: 281px; border: 1px solid #7f9cc4; background: #cbdcec; padding: 5px 4px 5px 0; }
    .table { height: 100%; background: #eee; border: 2px solid #8a94a0; border-width: 1px 2px 2px 1px; }
    .head { display: flex; height: 24px; font: 16.500px/23px "Liberation Sans", sans-serif; border-bottom: 2px solid #8a94a0; background: linear-gradient(#f8f8f8, #e6e6e6); }
    .head div { display: flex; justify-content: center; border-right: 1.500px solid #8a98ac; flex: none; }
    .head div:last-child { border-right: 0; flex: 1; }
    .task { height: 48px; flex: none; display: flex; background: linear-gradient(#2c68dc 0, #3a80f0 8%, #2a6ae4 20%, #245cdc 40%, #265edf 85%, #1a48b4 100%); color: #fff; font: 16px "DejaVu Sans Condensed", "DejaVu Sans", sans-serif; margin-top: 2px; }
    .start { width: 137px; background: linear-gradient(#3a7c3a 0, #5cb858 10%, #3c9c3c 30%, #359a35 75%, #226a24); border-radius: 0 10px 10px 0; display: flex; align-items: center; padding-left: 15px; gap: 4px; font: italic bold 23px "Open Sans", sans-serif; text-shadow: 1px 2px 2px #1a4a1a; box-shadow: inset -3px 0 5px #20602a; }
    .grip { width: 8px; height: 34px; flex: none; margin-top: 10px; background: radial-gradient(circle, #123a9c 1.500px, transparent 2px); background-size: 5px 7px; }
    .quick { display: flex; align-items: center; gap: 8.600px; width: 300px; padding: 4px 0 0 14px; }
    .quick .grip { margin-top: 4px; }
    .quick svg { flex: none; }
    .more { width: 19px; flex: none; font-size: 20px; line-height: 20px; color: #b8d0fa; padding-top: 7px; }
    .jobs { display: flex; gap: 2px; padding: 7px 0 4px; margin-left: 10px; }
    .job { width: 225.500px; display: flex; align-items: center; gap: 6px; padding-left: 13px; border-radius: 4px; background: linear-gradient(#5c9afa, #3c80f0 20%, #3a7ef0 85%, #2f6cd8); box-shadow: inset -1px 0 1px #1c4cb0; }
    .job.on { background: #1e4cb4; box-shadow: inset 1px 2px 3px #12307c; }
    .tray { margin-left: auto; width: 208px; display: flex; align-items: center; background: linear-gradient(#0c70d0 0, #18a4f4 8%, #1290e8 30%, #128ee8 85%, #0c68c0); border-left: 2px solid #0c4ca8; padding-top: 4px; }
    .tray svg { flex: none; }
    .tray .ico { margin-left: -16px; }
    .tray fit-text { margin-left: 9px; }
  `;

  private tab(text: string, w: number, tw: number, on = false) {
    return html`<div class=${classMap({ tab: true, on })} style=${styleMap({ width: `${w}px` })}><fit-text .w=${tw} text=${text}></fit-text></div>`;
  }
  private slider(label: string, lw: number, w: number, pos: number, hot = false) {
    return html`<div class="row"><div class="lab"><fit-text .w=${lw} text=${label}></fit-text></div><metal-slider .w=${w} .pos=${pos} .hot=${hot}></metal-slider></div>`;
  }
  private labeling(title: string, tw: number, font: number, hot: boolean) {
    return html`<fieldset><legend><fit-text .w=${tw} text=${title}></fit-text></legend>
      <div class="row first"><div class="combo"><fit-text .w=${103} text="By Centrality"></fit-text><div class="drop"><svg width="14" height="9"><path d="M0 0h14L7 9z" fill="#222" /></svg></div></div>
        <div class="check"></div><fit-text .w=${134} text="Show Frequency"></fit-text></div>
      ${this.slider("Threshold", 81, 377, 57)}${this.slider("Font Size", 72, 377, font, hot)}${this.slider("Node Size", 76, 377, 76)}
    </fieldset>`;
  }

  render() {
    return html`<div class="screen">
      <div class="title">${java(true)}<fit-text .w=${729} text="CiteSpace: Display Merged - (c) 2003-2005 Chaomei Chen [Nodes=321, Links=900]"></fit-text><span class="grow"></span>
        <svg width="97" height="32" viewBox="0 0 97 32">
          <defs><linearGradient id="bl" x2="1" y2="1"><stop stop-color="#6c96f0" /><stop offset="1" stop-color="#1c50d8" /></linearGradient><linearGradient id="rd" x2="1" y2="1"><stop stop-color="#f09070" /><stop offset="1" stop-color="#d83c14" /></linearGradient></defs>
          <g stroke="#dce8ff" stroke-width="1.500"><rect x="1" y="2" width="28" height="28" rx="4" fill="url(#bl)" /><rect x="34" y="2" width="28" height="28" rx="4" fill="url(#bl)" /><rect x="67" y="2" width="28" height="28" rx="4" fill="url(#rd)" /></g>
          <path d="M8 21h10v4H8z" fill="#fff" /><path d="M45 13v-4h10v10h-4M41 14h9v9H41zM41 15.500h9" fill="none" stroke="#fff" stroke-width="2" /><path d="M74 9l14 14M88 9L74 23" stroke="#fff" stroke-width="3" />
        </svg></div>
      <div class="menu">${([["File", 28], ["Layout", 54], ["Display", 59], ["Table", 43], ["Clustering", 83], ["Help", 35]] as [string, number][]).map(([t, w]) => html`<fit-text .w=${w} text=${t}></fit-text>`)}</div>
      <div class="main">
        <div class="left">
          <div class="legend">${years.map(([y, c]) => html`<div style=${styleMap({ background: c })}>${y}</div>`)}</div>
          <div class="zoom"><div class="lead"><fit-text .w=${79} text="Zoom Out"></fit-text></div>
            <div class="bar"><div class="btn l">${arrow(LEFT)}</div><div class="h1"></div><div class="knob k1"><i></i><i></i><i></i></div><div class="grow"></div><div class="btn r">${arrow(RIGHT)}</div></div>
            <div class="tail"><fit-text .w=${65} text="Zoom In"></fit-text></div></div>
          <div class="view"><citation-graph></citation-graph>
            <div class="bar"><div class="btn t">${arrow(UP)}</div><div class="v1"></div><div class="knob v k3"><i></i><i></i><i></i></div><div class="grow"></div><div class="btn b">${arrow(DOWN)}</div></div></div>
          <div class="bar"><div class="btn l">${arrow(LEFT)}</div><div class="h2"></div><div class="knob k2"><i></i><i></i><i></i></div><div class="grow"></div><div class="btn r">${arrow(RIGHT)}</div></div>
        </div>
        <div class="split"><svg width="8" height="12"><path d="M7 0v12L1 6z" fill="#5a6480" /></svg><svg width="8" height="12"><path d="M1 0v12l6-6z" fill="#5a6480" /></svg><div class="dots"></div></div>
        <div class="right">
          <div class="tabs">${this.tab("Visual Attributes", 164, 134, true)}${this.tab("Selected Nodes", 156, 127)}</div>
          <div class="pane"><div class="inner">
            ${this.labeling("Term Labeling", 116, 22, false)}
            ${this.labeling("Article Labeling", 126, 18, true)}
            <fieldset class="tall"><legend><fit-text .w=${54} text="Layout"></fit-text></legend>
              <div class="form stress"><fit-text .w=${54} text="Stress"></fit-text><div class="field">0.091</div><div class="field">0.005</div><metal-slider .w=${126} .pos=${10}></metal-slider></div>
              <div class="form scale"><fit-text .w=${46} text="Scale"></fit-text><div class="field">55.0</div><metal-slider .w=${121} .pos=${34}></metal-slider></div>
              <div class="sub">
                <div class="row opts"><div class="check"><svg width="16" height="16"><path d="M3 8l3 4 7-9" fill="none" stroke="#20304c" stroke-width="3" /></svg></div><fit-text .w=${71} text="Spotlight"></fit-text>
                  <div class="check c2"></div><fit-text .w=${107} text="Color Legend"></fit-text></div>
                ${this.slider("Darkness", 76, 371, 336)}${this.slider("Transparency", 108, 371, 56)}
                <div class="row pick"><fit-text .w=${141} text="Background Color"></fit-text><div class="select"><fit-text .w=${51} text="Select"></fit-text></div></div>
              </div>
            </fieldset>
          </div></div>
        </div>
      </div>
      <div class="hsplit"><svg width="12" height="8"><path d="M0 8h12L6 0z" fill="#5a6498" /></svg><svg width="12" height="8"><path d="M0 0h12L6 8z" fill="#5a6498" /></svg><div class="dots"></div></div>
      <div class="bottom">
        <div class="tabs">${this.tab("Node Details", 132, 101, true)}${this.tab("MeSH Headings - Major Topics", 276, 245)}${this.tab("MeSH Headings - Minor Topics", 274, 245)}</div>
        <div class="box"><div class="table"><div class="head">${columns.map(([t, w, tw]) => html`<div style=${styleMap({ width: `${w}px` })}><fit-text .w=${tw} text=${t}></fit-text></div>`)}</div></div></div>
      </div>
      <div class="task">
        <div class="start">${flag()}<fit-text .w=${55} text="start"></fit-text></div>
        <div class="quick"><div class="grip"></div>${launchers.map((l) => html`<svg width="24" height="24" viewBox="0 0 24 24">${l}</svg>`)}</div>
        <div class="more">»</div><div class="grip"></div>
        <div class="jobs">
          <div class="job">${outlook()}<fit-text .w=${162} text="Inbox - Microsoft Out..."></fit-text></div>
          <div class="job">${folder()}<fit-text .w=${164} text="C:\\Documents and Se..."></fit-text></div>
          <div class="job">${terminal()}<fit-text .w=${154} text="C:\\WINDOWS\\syste..."></fit-text></div>
          <div class="job">${java()}<fit-text .w=${163} text="CiteSpace v. 1.0.38 -..."></fit-text></div>
          <div class="job on">${java(true)}<fit-text .w=${160} text="CiteSpace: Display M..."></fit-text></div>
        </div>
        <div class="tray"><svg class="ico" width="132" height="30" viewBox="0 0 132 30">
          <circle cx="13" cy="15" r="12" fill="#4ab4f8" stroke="#a8dcff" stroke-width="1" /><path d="M16 9l-6 6 6 6" fill="none" stroke="#fff" stroke-width="3" />
          <path d="M33 7h13v12H33z" fill="#243850" stroke="#a8b8c8" stroke-width="1.500" /><path d="M34 21h11l2 3H31z" fill="#dce4ec" /><path d="M48 6q3 4 0 8M52 4q4 6 0 11" fill="none" stroke="#c8e8ff" stroke-width="1.500" />
          <circle cx="69" cy="15" r="8" fill="none" stroke="#38b048" stroke-width="5" /><path d="M64 22a8 8 0 0 1 0-14M62 17q8 4 10-6" fill="none" stroke="#e03828" stroke-width="3.500" /><path d="M69 23a8 8 0 0 0 8-8" fill="none" stroke="#a8d020" stroke-width="4" />
          <circle cx="93" cy="13" r="9" fill="#98a0a4" stroke="#dce0e0" /><circle cx="92" cy="12" r="4.500" fill="#3c4448" /><path d="M98 24q6-4 6-10" fill="none" stroke="#a8b8f8" stroke-width="2.500" />
          <path d="M108 3l4 11 9 5" fill="none" stroke="#f4f8f8" stroke-width="3" /><path d="M108 15l12-1 9 8-6 5-13-7z" fill="#b8bcb0" stroke="#343c34" /><circle cx="125" cy="23" r="3" fill="#e8c830" />
        </svg><fit-text .w=${56} text="9:03 PM"></fit-text></div>
      </div>
    </div>`;
  }
}
